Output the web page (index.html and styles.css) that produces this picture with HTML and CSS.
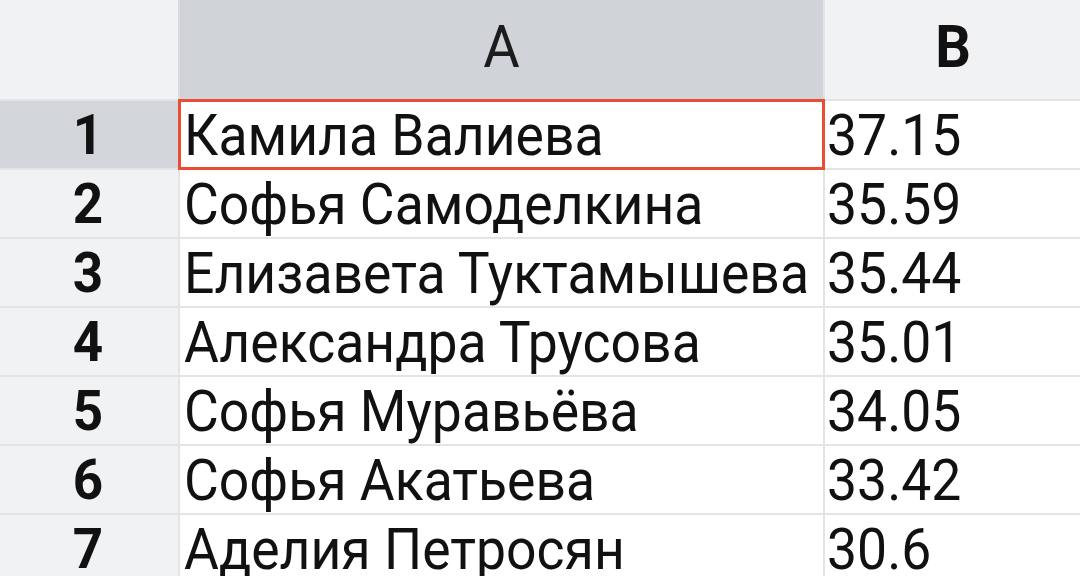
FILE: index.html
```html
<!DOCTYPE html>
<html lang="ru">
<head>
<meta charset="utf-8">
<link rel="stylesheet" href="styles.css">
</head>
<body>
<div class="sheet">
  <div class="row head">
    <div class="rn corner"></div>
    <div class="ch ch-a"><span class="t">A</span></div>
    <div class="ch ch-b"><span class="t">B</span></div>
  </div>
  <div class="row sel">
    <div class="rn"><span class="t">1</span></div>
    <div class="cell a active"><span class="t">Камила Валиева</span></div>
    <div class="cell b"><span class="t">37.15</span></div>
  </div>
  <div class="row">
    <div class="rn"><span class="t">2</span></div>
    <div class="cell a"><span class="t">Софья Самоделкина</span></div>
    <div class="cell b"><span class="t">35.59</span></div>
  </div>
  <div class="row">
    <div class="rn"><span class="t">3</span></div>
    <div class="cell a"><span class="t">Елизавета Туктамышева</span></div>
    <div class="cell b"><span class="t">35.44</span></div>
  </div>
  <div class="row">
    <div class="rn"><span class="t">4</span></div>
    <div class="cell a"><span class="t">Александра Трусова</span></div>
    <div class="cell b"><span class="t">35.01</span></div>
  </div>
  <div class="row">
    <div class="rn"><span class="t">5</span></div>
    <div class="cell a"><span class="t">Софья Муравьёва</span></div>
    <div class="cell b"><span class="t">34.05</span></div>
  </div>
  <div class="row">
    <div class="rn"><span class="t">6</span></div>
    <div class="cell a"><span class="t">Софья Акатьева</span></div>
    <div class="cell b"><span class="t">33.42</span></div>
  </div>
  <div class="row">
    <div class="rn"><span class="t">7</span></div>
    <div class="cell a"><span class="t">Аделия Петросян</span></div>
    <div class="cell b"><span class="t">30.6</span></div>
  </div>
</div>
</body>
</html>
```
FILE: styles.css
```css
html, body {
  margin: 0;
  padding: 0;
  background: #ffffff;
  overflow: hidden;
}
.sheet {
  width: 1080px;
  height: 576px;
  overflow: hidden;
  font-family: Roboto, "Noto Sans", sans-serif;
  color: #111111;
}
.t {
  display: inline-block;
  line-height: 1;
  transform: scaleY(1.06);
}
.row {
  display: grid;
  grid-template-columns: 178px 2px 643px 2px 260px;
  height: 67px;
  border-bottom: 2px solid #e3e4e7;
}
.row > .rn { grid-column: 1; }
.row > .a { grid-column: 3; }
.row > .b { grid-column: 5; }
.row::before {
  content: "";
  grid-column: 2;
  grid-row: 1;
  background: #e3e4e7;
}
.row::after {
  content: "";
  grid-column: 4;
  grid-row: 1;
  background: #e3e4e7;
}
.head {
  height: 99px;
  border-bottom: 2px solid #e3e4e7;
  background: #f1f2f4;
}
.head::before { background: #d9dbdf; }
.rn {
  grid-row: 1;
  background: #f1f2f4;
  display: flex;
  align-items: center;
  justify-content: center;
  font-size: 53px;
  font-weight: 700;
  padding-right: 2px;
  padding-top: 1px;
}
.corner { background: #f1f2f4; }
.ch {
  grid-row: 1;
  display: flex;
  align-items: center;
  justify-content: center;
  font-size: 56px;
  padding-bottom: 6px;
}
.ch-a {
  grid-column: 3;
  background: #d0d3d8;
  font-weight: 400;
  color: #1c1c1c;
}
.ch-b {
  grid-column: 5;
  font-weight: 700;
  padding-right: 4px;
}
.sel .rn { background: #d2d5da; }
.cell {
  grid-row: 1;
  display: flex;
  align-items: center;
  font-size: 53.5px;
  padding-left: 4px;
  padding-top: 2px;
  white-space: nowrap;
  overflow: visible;
}
.b { padding-left: 2px; }
.active {
  position: relative;
}
.active::after {
  content: "";
  position: absolute;
  left: -2px;
  top: -2px;
  right: -2px;
  bottom: -2px;
  border: 3px solid #ea4d33;
  pointer-events: none;
}
```
